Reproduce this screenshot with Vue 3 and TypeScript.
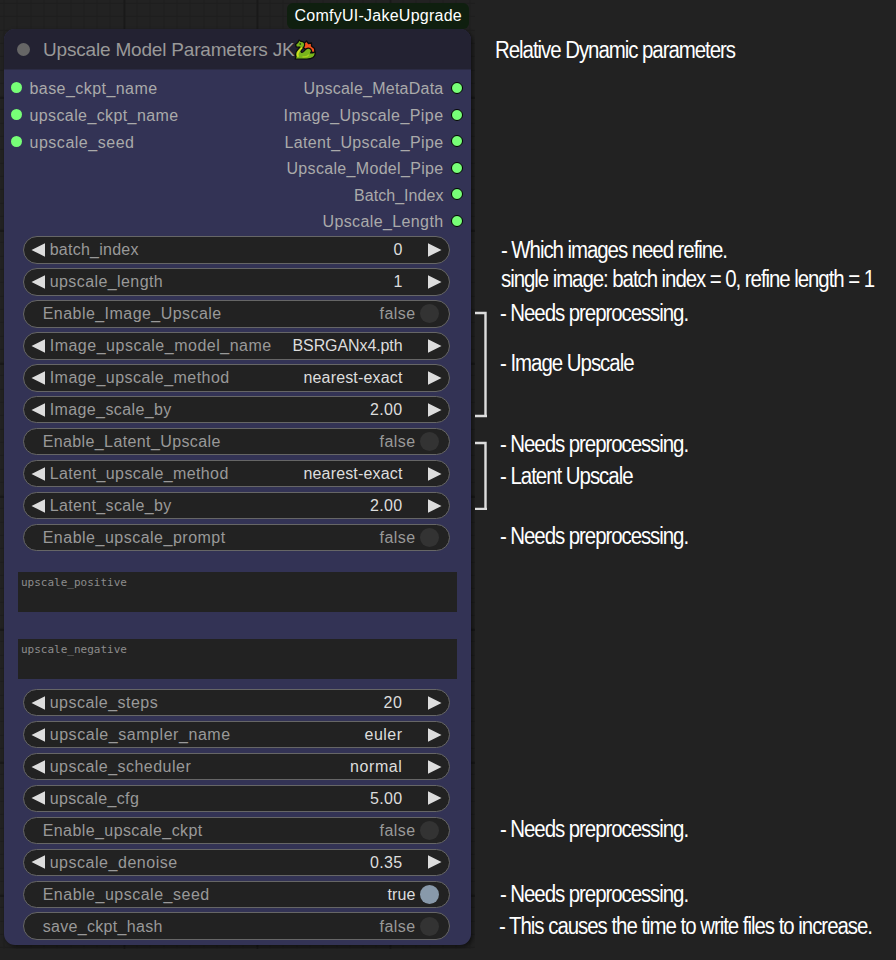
<script setup lang="ts">
interface Label { text: string; w: number }
interface Widget {
  kind: 'stepper' | 'toggle'
  label: Label
  value: Label
  on?: boolean
}
interface Note { text: string; w: number; top: number; indent: number }

// Tracks a text run so that it spans the given width.
const vFit = {
  mounted(el: HTMLElement, binding: { value: number }) {
    const natural = el.offsetWidth ? parseFloat(getComputedStyle(el).width) : 0
    const count = (el.textContent ?? '').length
    if (natural && count) el.style.letterSpacing = `${(binding.value - natural) / count}px`
  },
}

const L = (text: string, w: number): Label => ({ text, w })
const step = (text: string, w: number, v: string, vw: number): Widget => ({
  kind: 'stepper', label: L(text, w), value: L(v, vw),
})
const toggle = (text: string, w: number, on = false): Widget => ({
  kind: 'toggle', label: L(text, w), value: on ? L('true', 28) : L('false', 36), on,
})

const inputs = [L('base_ckpt_name', 128), L('upscale_ckpt_name', 149), L('upscale_seed', 105)]
const outputs = [
  L('Upscale_MetaData', 140),
  L('Image_Upscale_Pipe', 160),
  L('Latent_Upscale_Pipe', 159),
  L('Upscale_Model_Pipe', 157),
  L('Batch_Index', 89.5),
  L('Upscale_Length', 121),
]

const upper: Widget[] = [
  step('batch_index', 89, '0', 9),
  step('upscale_length', 113.5, '1', 9),
  toggle('Enable_Image_Upscale', 179),
  step('Image_upscale_model_name', 222, 'BSRGANx4.pth', 110),
  step('Image_upscale_method', 180, 'nearest-exact', 99),
  step('Image_scale_by', 122, '2.00', 32.5),
  toggle('Enable_Latent_Upscale', 178),
  step('Latent_upscale_method', 179, 'nearest-exact', 99),
  step('Latent_scale_by', 122, '2.00', 32.5),
  toggle('Enable_upscale_prompt', 183),
]
const lower: Widget[] = [
  step('upscale_steps', 108.5, '20', 19),
  step('upscale_sampler_name', 181, 'euler', 38),
  step('upscale_scheduler', 141.5, 'normal', 52.5),
  step('upscale_cfg', 89.5, '5.00', 32.5),
  toggle('Enable_upscale_ckpt', 160),
  step('upscale_denoise', 128, '0.35', 32.5),
  toggle('Enable_upscale_seed', 167, true),
  toggle('save_ckpt_hash', 120),
]
const groups = [upper, lower]
const prompts = ['upscale_positive', 'upscale_negative']

const LINE = 28
const NARROW = 0.87
const notes: Note[] = [
  { text: 'Relative Dynamic parameters', w: 240, top: 36, indent: 0.7 },
  { text: '- Which images need refine.', w: 226, top: 235.5, indent: 6.7 },
  { text: 'single image: batch index = 0, refine length = 1', w: 373, top: 264.7, indent: 6.7 },
  { text: '- Needs preprocessing.', w: 188, top: 299, indent: 5.7 },
  { text: '- Image Upscale', w: 133.5, top: 348.7, indent: 5.7 },
  { text: '- Needs preprocessing.', w: 188, top: 430, indent: 5.7 },
  { text: '- Latent Upscale', w: 132.5, top: 461.7, indent: 5.7 },
  { text: '- Needs preprocessing.', w: 188, top: 522, indent: 5.7 },
  { text: '- Needs preprocessing.', w: 188, top: 814.7, indent: 5.7 },
  { text: '- Needs preprocessing.', w: 188, top: 879.7, indent: 5.7 },
  { text: '- This causes the time to write files to increase.', w: 373, top: 912, indent: 4.7 },
]
const gapBefore = (i: number) => notes[i].top - (i ? notes[i - 1].top + LINE : 0)
</script>

<template>
  <main class="page">
    <section class="canvas">
      <div class="badge-row"><span class="badge"><span v-fit="167.5">ComfyUI-JakeUpgrade</span></span></div>
      <article class="node">
        <header class="title">
          <i class="collapse"></i>
          <span v-fit="251.5" class="title-text">Upscale Model Parameters JK</span>
          <svg class="dragon" viewBox="0 0 22 21">
            <path d="M9.5 9 L10 4.5 L12.5 2 L14.5 4.5 L17.5 4 L17.5 7 L20.5 9.5 L21 14 L17 13 Z" fill="#f4511e" stroke="#0b0b0b" stroke-width="1.3" stroke-linejoin="round" />
            <path d="M1.5 5.5 L4 3.2 L5 1 L7 2.4 Q10.8 2.6 10.6 6.2 Q10 9 7.5 10.8 Q6.4 12.6 7.6 13.4 Q9 14 11 11 Q13.5 8 16.6 10 Q18.4 12 16.6 14 L18.8 14 L20.8 12.8 Q22 16.4 19 18.6 Q16.5 20.2 12 20 L1.2 20 L2 17.8 Q.6 14.5 3 11.5 L6 8.2 L2.3 8 Z" fill="#79b51c" stroke="#0b0b0b" stroke-width="1.2" stroke-linejoin="round" />
            <path d="M4.2 17.8 Q2.7 14.4 5.2 11.6 L8 8.6" fill="none" stroke="#d2dd22" stroke-width="1.7" />
            <path d="M8.5 17.8 Q13 18.4 15 15.8" fill="none" stroke="#a9d11f" stroke-width="1.4" />
            <circle cx="6.2" cy="5" r=".8" fill="#111" />
          </svg>
        </header>

        <div class="slots">
          <ul class="inputs">
            <li v-for="s in inputs" :key="s.text"><i class="port"></i><span v-fit="s.w">{{ s.text }}</span></li>
          </ul>
          <ul class="outputs">
            <li v-for="s in outputs" :key="s.text"><span v-fit="s.w">{{ s.text }}</span><i class="port ring"></i></li>
          </ul>
        </div>

        <template v-for="(group, g) in groups" :key="g">
          <div class="widgets">
            <div v-for="w in group" :key="w.label.text" class="widget" :class="[w.kind, { on: w.on }]">
              <svg v-if="w.kind === 'stepper'" class="arrow" viewBox="0 0 14 14"><path d="M14 0.3V13.7L0.5 7Z" /></svg>
              <span v-fit="w.label.w" class="label">{{ w.label.text }}</span>
              <span class="space"></span>
              <span v-fit="w.value.w" class="value">{{ w.value.text }}</span>
              <svg v-if="w.kind === 'stepper'" class="arrow next" viewBox="0 0 14 14"><path d="M0 0.3V13.7L13.5 7Z" /></svg>
              <i v-else class="knob"></i>
            </div>
          </div>
          <div v-if="g === 0" class="prompts">
            <div v-for="p in prompts" :key="p" class="prompt">{{ p }}</div>
          </div>
        </template>
      </article>
    </section>

    <aside class="notes">
      <svg class="brackets" viewBox="0 0 14 200">
        <path d="M0 3H10.5V106M0 106H12" />
        <path d="M0 133H10.5V199M0 199H12" />
      </svg>
      <p
        v-for="(n, i) in notes"
        :key="i"
        class="note"
        :style="{ marginTop: gapBefore(i) + 'px', marginLeft: n.indent + 'px' }"
      ><span v-fit="n.w / NARROW">{{ n.text }}</span></p>
    </aside>
  </main>
</template>

<style>
body { background: #222; }
</style>

<style scoped>
.page {
  display: flex;
  width: 896px;
  height: 960px;
  overflow: hidden;
  background: #222;
  font-family: "Liberation Sans", Arial, sans-serif;
  font-size: 16px;
}
span { white-space: pre; }
i { display: block; flex: none; }
.canvas {
  box-sizing: border-box;
  width: 475px;
  height: 949px;
  padding: 3px 0 0 3.5px;
  overflow: hidden;
  background:
    linear-gradient(90deg, #191919 2px, transparent 2px) 123.5px 0 / 133px 133px,
    linear-gradient(#191919 2px, transparent 2px) 0 97px / 133px 133px,
    repeating-linear-gradient(90deg, #1d1d1d 0 1px, transparent 1px 13.3px) 3.5px 0 / 133px 133px,
    repeating-linear-gradient(#1d1d1d 0 1px, transparent 1px 13.3px) 0 2.8px / 133px 133px,
    #222;
}
.badge-row {
  display: flex;
  justify-content: flex-end;
  width: 465.5px;
  height: 26px;
}
.badge {
  box-sizing: border-box;
  width: 182px;
  height: 26px;
  padding-left: 7.5px;
  border-radius: 6px;
  background: #0f1f0f;
  color: #fff;
  line-height: 25px;
}
.badge > span { display: inline-block; }
.node {
  width: 467px;
  height: 916px;
  border-radius: 11px;
  background: #335;
  box-shadow: 2px 2px 4px rgba(0, 0, 0, .5);
}
.title {
  display: flex;
  align-items: center;
  box-sizing: border-box;
  height: 41px;
  padding: 1px 0 0 13px;
  border-bottom: 1px solid #2b2b44;
  border-radius: 11px 11px 0 0;
  background: #232232;
  color: #999;
  font-size: 19px;
}
.collapse {
  width: 13.5px;
  height: 13.5px;
  border-radius: 50%;
  background: #666;
}
.title-text { margin-left: 13px; }
.dragon { width: 22px; height: 21px; flex: none; margin-left: -.5px; }
.slots {
  display: flex;
  justify-content: space-between;
  height: 166.3px;
  padding: 6.2px 8px 0 7px;
  box-sizing: border-box;
  color: #aaa;
}
ul { margin: 0; padding: 0; list-style: none; }
li {
  display: flex;
  align-items: center;
  height: 26.6px;
}
.outputs li { justify-content: flex-end; }
.port {
  box-sizing: border-box;
  width: 11px;
  height: 11px;
  margin: -3px 8px 0 0;
  border-radius: 50%;
  background: #7f7;
}
.port.ring {
  width: 12px;
  height: 12px;
  margin: -3px 0 0 7px;
  border: 1.3px solid #000;
}
.widgets {
  display: grid;
  grid-auto-rows: 27.5px;
  row-gap: 4.45px;
  padding: 0 21px 0 19.5px;
}
.widget {
  display: flex;
  align-items: center;
  box-sizing: border-box;
  border: 1.4px solid #666;
  border-radius: 14px;
  background: #222;
  color: #999;
}
.label, .value { padding-top: .6px; }
.space { flex: 1; }
.value { color: #ddd; }
.arrow {
  width: 14px;
  height: 14px;
  margin: 0 4.7px 0 7px;
  flex: none;
  fill: #ddd;
}
.arrow.next { margin: 0 7px 0 25px; }
.toggle .label { margin-left: 18.7px; }
.toggle .value { color: #999; }
.toggle.on .value { color: #ddd; }
.knob {
  width: 19px;
  height: 19px;
  margin: 0 10px 0 4px;
  border-radius: 50%;
  background: #333;
}
.on .knob { background: #89a; }
.prompts {
  display: grid;
  grid-auto-rows: 40px;
  row-gap: 27px;
  padding: 20.7px 13.5px 10px 14.5px;
}
.prompt {
  padding: 4px 0 0 3px;
  background: #222;
  color: #8c8c8c;
  font: 11px/14px "DejaVu Sans Mono", monospace;
}
.notes {
  position: relative;
  display: flex;
  flex-direction: column;
  align-items: flex-start;
  width: 401px;
  margin-left: 19px;
  color: #fff;
  font-size: 23.5px;
  line-height: 28px;
}
.note {
  display: flex;
  height: 28px;
  margin-bottom: 0;
}
.note span {
  transform: scaleX(.87);
  transform-origin: left;
}
.brackets {
  position: absolute;
  left: -19px;
  top: 310px;
  width: 14px;
  height: 200px;
  fill: none;
  stroke: #ddd;
  stroke-width: 2.4;
}
</style>
